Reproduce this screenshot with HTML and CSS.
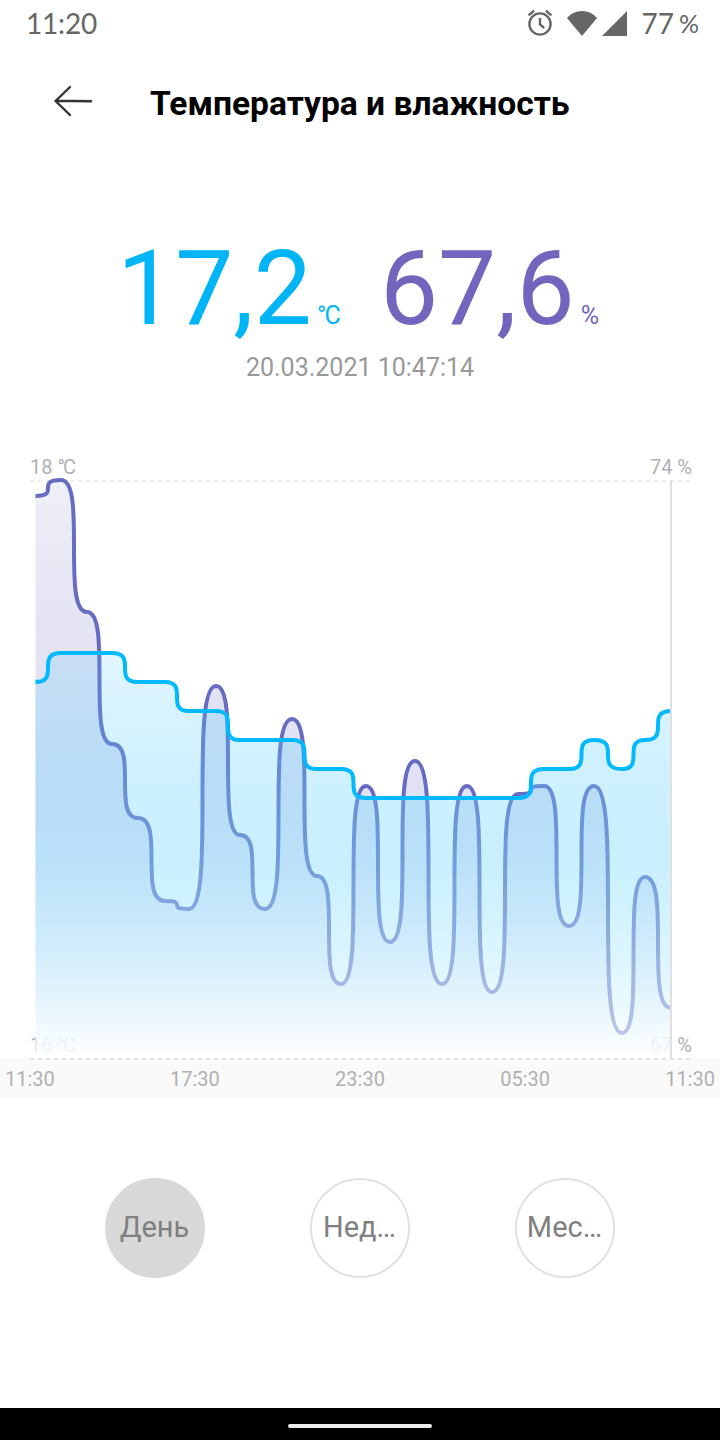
FILE: index.html
```
<!DOCTYPE html>
<html lang="ru">
<head>
    <meta charset="UTF-8">
    <meta name="viewport" content="width=device-width, initial-scale=1.0">
    <title>Температура и влажность</title>
    <link rel="stylesheet" href="styles.css">
</head>
<body>
    <!-- Status Bar -->
    <div class="status-bar">
        <div class="clock">11:20</div>
        <div class="status-icons">
            <svg class="alarm" width="28" height="28" viewBox="0 0 28 28">
                <circle cx="14" cy="15" r="10.6" />
                <path d="M14 9v6.400l4.200 3.600M2.500 6.400l5.600-4.600M25.500 6.400l-5.600-4.600" />
            </svg>
            <svg class="wifi" width="30" height="25" viewBox="0 0 30 25">
                <path d="M0 7Q6 0 15 0T30 7L15 25z" />
            </svg>
            <svg class="signal" width="25" height="25" viewBox="0 0 25 25">
                <path d="M25 0v25H0z" />
            </svg>
            <div class="battery">77<span>%</span></div>
        </div>
    </div>

    <!-- Header -->
    <div class="header">
        <svg class="back" width="40" height="32" viewBox="0 0 40 32">
            <path d="M17 2L2.500 16L17 30M2.500 15.700L38 16.200" />
        </svg>
        <h1>Температура и влажность</h1>
    </div>

    <!-- Current Values -->
    <div class="values">
        <div class="value temperature">17,2<span class="unit degrees">°C</span></div>
        <div class="value humidity">67,6<span class="unit">%</span></div>
    </div>
    <div class="date">20.03.2021 10:47:14</div>

    <!-- Chart -->
    <svg class="chart" width="720" height="618" viewBox="0 440 720 618">
        <defs>
            <linearGradient id="humidity-fill" gradientUnits="userSpaceOnUse" x1="0" y1="480" x2="0" y2="1058">
                <stop offset="0" stop-color="#6b6cc0" stop-opacity="0.1" />
                <stop offset="0.5" stop-color="#aaacdc" stop-opacity="0.36" />
                <stop offset="1" stop-color="#ffffff" stop-opacity="0.65" />
            </linearGradient>
            <linearGradient id="temperature-fill" gradientUnits="userSpaceOnUse" x1="0" y1="653" x2="0" y2="1058">
                <stop offset="0" stop-color="#3ec3ff" stop-opacity="0.15" />
                <stop offset="0.5" stop-color="#7edbff" stop-opacity="0.42" />
                <stop offset="1" stop-color="#ffffff" stop-opacity="0.65" />
            </linearGradient>
            <clipPath id="plot"><rect x="35.500" y="470" width="635.500" height="588" /></clipPath>
        </defs>
        <path class="grid" d="M30 481H692" />
        <text class="label" x="30" y="474">18 <tspan class="degrees">°C</tspan></text>
        <text class="label end" x="692" y="474">74 %</text>
        <text class="label" x="30" y="1052">16 <tspan class="degrees">°C</tspan></text>
        <text class="label end" x="692" y="1052">67 %</text>
        <g clip-path="url(#plot)">
            <path class="humidity-area" id="humidity-area" />
            <path class="humidity-line" id="humidity-line" />
            <path class="temperature-area" id="temperature-area" />
            <path class="temperature-line" id="temperature-line" />
        </g>
        <path class="cursor" d="M671 480V1058" />
    </svg>
    <div class="time-axis">
        <span>11:30</span>
        <span>17:30</span>
        <span>23:30</span>
        <span>05:30</span>
        <span>11:30</span>
    </div>

    <!-- Period Buttons -->
    <div class="periods">
        <button class="period active">День</button>
        <button class="period">Нед…</button>
        <button class="period">Мес…</button>
    </div>

    <!-- System Navigation -->
    <div class="nav-bar"><div class="handle"></div></div>

    <script>
        const xs = [35, 61, 87, 112, 138, 165, 189, 216, 240, 265, 292, 317, 341,
            366, 390, 415, 442, 467, 492, 518, 544, 569, 594, 622, 645, 671];
        const humidity = [496, 480, 612, 744, 818, 901, 909, 686, 835, 909, 719, 876, 984,
            786, 942, 761, 984, 786, 992, 794, 786, 926, 786, 1033, 877, 1008];
        const temperature = [682, 653, 653, 653, 682, 682, 711, 711, 740, 740, 740, 769, 769,
            798, 798, 798, 798, 798, 798, 798, 769, 769, 740, 769, 740, 711];

        // Smooth step between every two neighbouring points
        function drawSeries(name, ys) {
            let d = `M${xs[0]} ${ys[0]}`;
            for (let i = 1; i < xs.length; i++) {
                d += `C${xs[i]} ${ys[i - 1]} ${xs[i - 1]} ${ys[i]} ${xs[i]} ${ys[i]}`;
            }
            document.getElementById(name + '-line').setAttribute('d', d);
            document.getElementById(name + '-area').setAttribute('d', d + `V1058H${xs[0]}Z`);
        }

        drawSeries('humidity', humidity);
        drawSeries('temperature', temperature);
    </script>
</body>
</html>
```
FILE: styles.css
```
body {
    font-family: Roboto, sans-serif;
    margin: 0;
    width: 720px;
    height: 1440px;
    display: flex;
    flex-direction: column;
    background-color: #fff;
    overflow: hidden;
}

/* Status Bar */
.status-bar {
    height: 46px;
    padding: 0 21px 0 26px;
    display: flex;
    justify-content: space-between;
    align-items: center;
    font-family: Lato, sans-serif;
    font-size: 28px;
    color: #666;
}
.clock {
    letter-spacing: -0.2px;
}
.status-icons {
    display: flex;
    align-items: center;
}
.alarm {
    fill: none;
    stroke: #666;
    stroke-width: 2.4;
}
.wifi {
    margin-left: 13px;
    fill: #666;
}
.signal {
    margin-left: 5px;
    fill: #666;
}
.battery {
    margin-left: 15px;
    display: flex;
}
.battery span {
    width: 20px;
    margin-left: 5px;
    font-size: 25px;
    line-height: 34px;
}

/* Header */
.header {
    height: 110px;
    display: flex;
    align-items: center;
}
.header h1 {
    margin: 6px 0 0 57px;
    font-size: 33.6px;
    font-weight: bold;
    line-height: 44px;
    color: #000;
    white-space: nowrap;
}
.back {
    margin-left: 53px;
    fill: none;
    stroke: #333;
    stroke-width: 2.4;
    stroke-linecap: round;
    stroke-linejoin: round;
}

/* Current Values */
.values {
    height: 121px;
    padding: 72px 0 0 117px;
    display: flex;
    gap: 41px;
    line-height: 122px;
    white-space: nowrap;
}
.value {
    font-size: 103.5px;
}
.unit {
    margin-left: 6px;
    font-size: 25px;
}
.degrees {
    margin-left: 5px;
    letter-spacing: -1.8px;
}
.temperature {
    color: #00b5f7;
}
.humidity {
    color: #7365bd;
}
.date {
    height: 91px;
    font-size: 25px;
    line-height: 38px;
    text-align: center;
    color: #999;
}

/* Chart */
.chart {
    display: block;
    flex: none;
}
.grid {
    fill: none;
    stroke: #e8e8e8;
    stroke-width: 1.5;
    stroke-dasharray: 4 4;
}
.label {
    font-size: 20px;
    fill: #b0b0b0;
}
.label.end {
    text-anchor: end;
}
.humidity-area {
    fill: url(#humidity-fill);
}
.temperature-area {
    fill: url(#temperature-fill);
}
.humidity-line,
.temperature-line {
    fill: none;
    stroke-width: 4;
}
.humidity-line {
    stroke: #676cc3;
}
.temperature-line {
    stroke: #00b9ff;
}
.cursor {
    stroke: #e0e0e0;
    stroke-width: 2;
}
.time-axis {
    box-sizing: border-box;
    height: 40px;
    padding: 0 5px;
    display: flex;
    flex: none;
    justify-content: space-between;
    background: repeating-linear-gradient(90deg, #e4e4e4 0 4px, transparent 4px 8px) 30px 0 / 662px 2px no-repeat #fafafa;
    font-size: 20px;
    line-height: 42px;
    color: #b0b0b0;
}

/* Period Buttons */
.periods {
    flex: 1;
    padding: 80px 105px 0;
    display: flex;
    justify-content: space-between;
    align-items: flex-start;
}
.period {
    width: 100px;
    height: 100px;
    padding: 0 1px 2px 0;
    border: 2px solid #e0e2e2;
    border-radius: 50%;
    background-color: transparent;
    font-family: inherit;
    font-size: 29px;
    color: #808080;
}
.period.active {
    border-color: #d8d8d8;
    background-color: #d8d8d8;
}

/* System Navigation */
.nav-bar {
    height: 32px;
    display: flex;
    flex: none;
    justify-content: center;
    align-items: center;
    background-color: #000;
}
.handle {
    width: 144px;
    height: 4px;
    margin-top: 4px;
    border-radius: 2px;
    background-color: #ececec;
}
```
